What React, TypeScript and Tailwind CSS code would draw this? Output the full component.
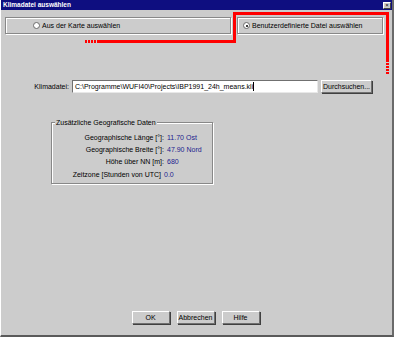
import React from 'react'

const font = { fontFamily: '"Liberation Sans", Arial, sans-serif' }

const felder = [
  { label: 'Geographische Länge [°]:', wert: '11.70 Ost' },
  { label: 'Geographische Breite [°]:', wert: '47.90 Nord' },
  { label: 'Höhe über NN [m]:', wert: '680' },
  { label: 'Zeitzone [Stunden von UTC]', wert: '0.0' }
]

function Radio({ checked }: { checked?: boolean }) {
  return (
    <span className="relative inline-block w-[7px] h-[7px] rounded-full bg-white border border-[#6a6a6a] shrink-0">
      {checked && <span className="absolute left-[1.5px] top-[1.5px] w-[2px] h-[2px] rounded-full bg-black" />}
    </span>
  )
}

function Knopf({ children, className = '' }: { children: React.ReactNode; className?: string }) {
  return (
    <button
      className={`h-[13px] bg-[#cccccc] border border-t-white border-l-white border-r-[#707070] border-b-[#707070] shadow-[1px_1px_0_#404040] text-[7px] leading-none text-black flex items-center justify-center ${className}`}
    >
      {children}
    </button>
  )
}

export default function App() {
  return (
    <div style={font} className="relative w-[394px] h-[337px] bg-[#cccccc] border-l border-l-white border-r-2 border-r-[#6a6a6a] border-b-2 border-b-[#5a5a5a] flex flex-col overflow-hidden">
      {/* Titelleiste */}
      <div className="h-[10px] bg-[#0e0e80] flex items-center justify-between pl-[2px] pr-[1px]">
        <span className="text-white text-[6.5px] font-bold leading-none">Klimadatei auswählen</span>
        <span className="w-[8px] h-[7px] bg-[#cccccc] border border-t-white border-l-white border-r-[#404040] border-b-[#404040] text-[6px] leading-[5px] text-black flex items-center justify-center">
          ×
        </span>
      </div>

      {/* Auswahl */}
      <div className="flex gap-[6px] pl-[4px] mt-[7px] text-[7px] text-black">
        <label className="w-[226px] h-[17px] border border-[#888] shadow-[inset_1px_1px_0_#fff,1px_1px_0_#fff] flex items-center gap-[2px] pl-[27px]">
          <Radio />
          <span className="leading-none">Aus der Karte auswählen</span>
        </label>
        <label className="w-[146px] h-[17px] border border-[#888] shadow-[inset_1px_1px_0_#fff,1px_1px_0_#fff] flex items-center gap-[2px] pl-[5px]">
          <Radio checked />
          <span className="leading-none">Benutzerdefinierte Datei auswählen</span>
        </label>
      </div>

      {/* Klimadatei */}
      <div className="flex items-center mt-[46px] text-[7px] text-black">
        <span className="w-[68px] text-right leading-none">Klimadatei:</span>
        <div className="ml-[3px] w-[246px] h-[13px] bg-white border border-t-[#707070] border-l-[#707070] border-r-[#e8e8e8] border-b-[#e8e8e8] flex items-center pl-[2px]">
          <span className="leading-none whitespace-nowrap">C:\Programme\WUFI40\Projects\IBP1991_24h_means.kli</span>
          <span className="w-px h-[9px] bg-black" />
        </div>
        <Knopf className="ml-[3px] w-[51px]">Durchsuchen...</Knopf>
      </div>

      {/* Geografische Daten */}
      <div className="relative ml-[50px] mt-[29px] w-[162px] h-[62px] border border-[#888] shadow-[inset_1px_1px_0_#fff,1px_1px_0_#fff] text-[7px] pt-[8px]">
        <span className="absolute left-[3px] top-[-4px] bg-[#cccccc] px-px leading-none text-black">Zusätzliche Geografische Daten</span>
        {felder.map((f, i) => (
          <div key={i} className="flex items-center h-[12.4px]">
            <span className={`w-[112px] text-right text-black leading-none ${i === 3 ? 'pr-[3px]' : ''}`}>{f.label}</span>
            <span className={`text-[#1c1c8e] leading-none ${i === 3 ? 'ml-0' : 'ml-[3px]'}`}>{f.wert}</span>
          </div>
        ))}
      </div>

      {/* Schaltflächen */}
      <div className="flex justify-center gap-[7px] mt-[127px] pr-[2px]">
        <Knopf className="w-[38px]">OK</Knopf>
        <Knopf className="w-[38px]">Abbrechen</Knopf>
        <Knopf className="w-[38px]">Hilfe</Knopf>
      </div>

      {/* Rote Markierung */}
      <svg className="absolute left-[-1px] top-0 pointer-events-none" width="394" height="337" shapeRendering="crispEdges">
        <rect x="99" y="40" width="137" height="3" fill="#ff0000" />
        <rect x="233" y="12" width="3" height="31" fill="#ff0000" />
        <rect x="233" y="12" width="156" height="3" fill="#ff0000" />
        <rect x="386" y="12" width="3" height="50" fill="#ff0000" />
        {[85, 88, 91, 94, 97].map((x) => (
          <rect key={x} x={x} y="40" width="2" height="3" fill="#ff0000" />
        ))}
        {[63, 66, 69, 72].map((y) => (
          <rect key={y} x="386" y={y} width="3" height="2" fill="#ff0000" />
        ))}
      </svg>
    </div>
  )
}
